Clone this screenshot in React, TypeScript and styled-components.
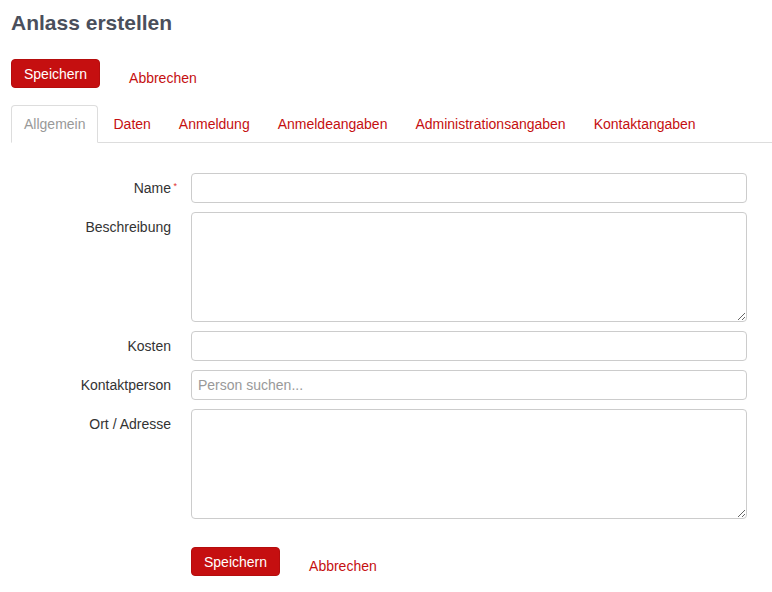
import React from "react";
import styled, { createGlobalStyle } from "styled-components";

const Global = createGlobalStyle`
  html, body { margin: 0; padding: 0; background: #fff; }
  body { font-family: "Liberation Sans", Arial, Helvetica, sans-serif; font-size: 14px; color: #333; }
  * { box-sizing: border-box; }
`;

const Page = styled.div`
  padding: 11px 0 0 11px;
`;

const Title = styled.h1`
  margin: 0;
  font-size: 21px;
  line-height: 24px;
  font-weight: bold;
  color: #4a4f5c;
`;

const ActionBar = styled.div<{ $top: number; $indent?: number }>`
  display: flex;
  align-items: center;
  margin-top: ${(p) => p.$top}px;
  margin-left: ${(p) => p.$indent ?? 0}px;
  gap: 29px;
`;

const PrimaryButton = styled.button`
  height: 29px;
  padding: 0 12px;
  border: 1px solid #b50d0d;
  border-radius: 4px;
  background: #c50f10;
  color: #fff;
  font-family: inherit;
  font-size: 14px;
  line-height: 20px;
  cursor: pointer;
`;

const CancelLink = styled.a`
  color: #c50f10;
  font-size: 14px;
  line-height: 20px;
  text-decoration: none;
  padding-top: 9px;
  cursor: pointer;
`;

const Tabs = styled.ul`
  display: flex;
  list-style: none;
  margin: 17px 0 0 0;
  padding: 0;
  border-bottom: 1px solid #ddd;
`;

const Tab = styled.li<{ $active?: boolean }>`
  margin: 0 2px -1px 0;
  padding: 8px 12px;
  line-height: 20px;
  font-size: 14px;
  border: 1px solid ${(p) => (p.$active ? "#ddd" : "transparent")};
  border-bottom-color: ${(p) => (p.$active ? "#fff" : "transparent")};
  border-radius: 4px 4px 0 0;
  background: ${(p) => (p.$active ? "#fff" : "transparent")};
  color: ${(p) => (p.$active ? "#999" : "#c50f10")};
  cursor: pointer;
`;

const Form = styled.form`
  display: flex;
  flex-direction: column;
  gap: 9px;
  margin-top: 30px;
`;

const Row = styled.div`
  display: grid;
  grid-template-columns: 160px 556px;
  column-gap: 20px;
  align-items: start;
`;

const Label = styled.label`
  position: relative;
  text-align: right;
  line-height: 30px;
  font-size: 14px;
  color: #333;
`;

const Required = styled.span`
  position: absolute;
  right: -6px;
  top: -2px;
  font-size: 9px;
  color: #e03030;
`;

const TextInput = styled.input`
  width: 100%;
  height: 30px;
  padding: 4px 6px;
  border: 1px solid #ccc;
  border-radius: 4px;
  font-family: inherit;
  font-size: 14px;
  color: #555;
  background: #fff;
  &::placeholder { color: #999; }
`;

const TextArea = styled.textarea`
  display: block;
  width: 100%;
  height: 110px;
  padding: 4px 6px;
  border: 1px solid #ccc;
  border-radius: 4px;
  font-family: inherit;
  font-size: 14px;
  color: #555;
  background: #fff;
  resize: both;
  margin: 0;
`;

const tabs = [
  "Allgemein",
  "Daten",
  "Anmeldung",
  "Anmeldeangaben",
  "Administrationsangaben",
  "Kontaktangaben",
];

export default function App() {
  return (
    <>
      <Global />
      <Page>
        <Title>Anlass erstellen</Title>
        <ActionBar $top={24}>
          <PrimaryButton type="button">Speichern</PrimaryButton>
          <CancelLink>Abbrechen</CancelLink>
        </ActionBar>
        <Tabs>
          {tabs.map((t, i) => (
            <Tab key={t} $active={i === 0}>
              {t}
            </Tab>
          ))}
        </Tabs>
        <Form onSubmit={(e) => e.preventDefault()}>
          <Row>
            <Label>
              Name<Required>*</Required>
            </Label>
            <TextInput />
          </Row>
          <Row>
            <Label>Beschreibung</Label>
            <TextArea />
          </Row>
          <Row>
            <Label>Kosten</Label>
            <TextInput />
          </Row>
          <Row>
            <Label>Kontaktperson</Label>
            <TextInput placeholder="Person suchen..." />
          </Row>
          <Row>
            <Label>Ort / Adresse</Label>
            <TextArea />
          </Row>
        </Form>
        <ActionBar $top={28} $indent={180}>
          <PrimaryButton type="button">Speichern</PrimaryButton>
          <CancelLink>Abbrechen</CancelLink>
        </ActionBar>
      </Page>
    </>
  );
}
